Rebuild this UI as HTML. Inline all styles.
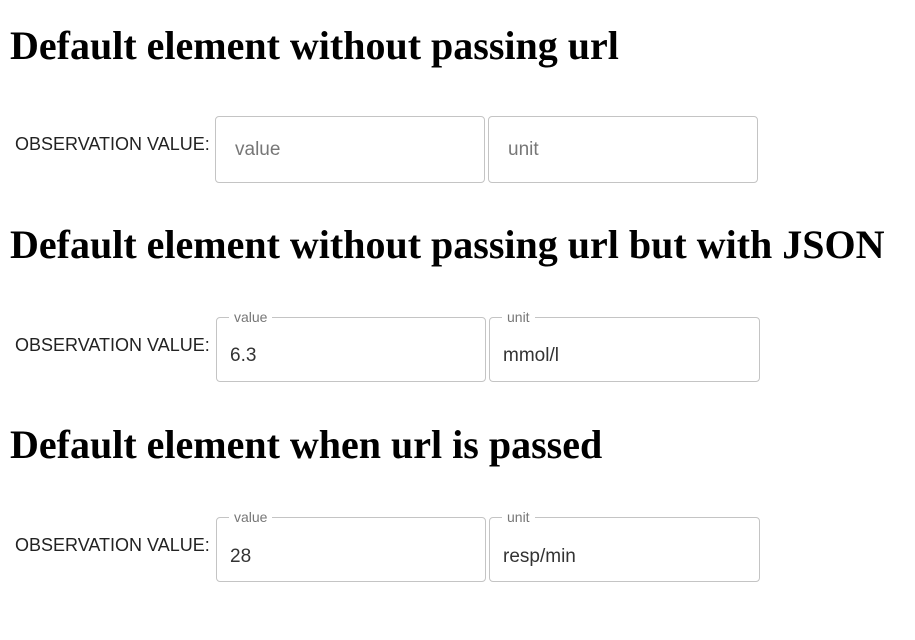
<!DOCTYPE html>
<html><head><style>
body{margin:0;background:#fff;width:915px;height:640px;position:relative;overflow:hidden;font-family:"Liberation Sans",Arial,sans-serif}
h1{position:absolute;left:10px;margin:0;font-family:"Liberation Serif","Times New Roman",serif;font-weight:bold;font-size:40px;line-height:40px;color:#000;white-space:nowrap}
.lbl{position:absolute;left:15px;font-size:18px;color:#222;white-space:nowrap}
.box{position:absolute;border:1px solid #c4c4c4;border-radius:4px;box-sizing:border-box}
.ph{position:absolute;left:19px;font-size:19px;color:#777}
.val{position:absolute;left:13px;font-size:19px;color:#333}
.lg{position:absolute;top:-9px;left:12px;background:#fff;padding:0 5px;font-size:14px;color:#777;line-height:16px}
</style></head><body>
<h1 style="top:26px">Default element without passing url</h1>
<div class="lbl" style="top:134px">OBSERVATION VALUE:</div>
<div class="box" style="left:215px;top:116px;width:270px;height:67px"><span class="ph" style="top:22px">value</span></div>
<div class="box" style="left:488px;top:116px;width:270px;height:67px"><span class="ph" style="top:22px">unit</span></div>

<h1 style="top:225px">Default element without passing url but with JSON</h1>
<div class="lbl" style="top:335px">OBSERVATION VALUE:</div>
<div class="box" style="left:216px;top:317px;width:270px;height:65px"><span class="lg">value</span><span class="val" style="top:27px">6.3</span></div>
<div class="box" style="left:489px;top:317px;width:271px;height:65px"><span class="lg">unit</span><span class="val" style="top:27px">mmol/l</span></div>

<h1 style="top:425px">Default element when url is passed</h1>
<div class="lbl" style="top:535px">OBSERVATION VALUE:</div>
<div class="box" style="left:216px;top:517px;width:270px;height:65px"><span class="lg">value</span><span class="val" style="top:28px">28</span></div>
<div class="box" style="left:489px;top:517px;width:271px;height:65px"><span class="lg">unit</span><span class="val" style="top:28px">resp/min</span></div>
</body></html>
